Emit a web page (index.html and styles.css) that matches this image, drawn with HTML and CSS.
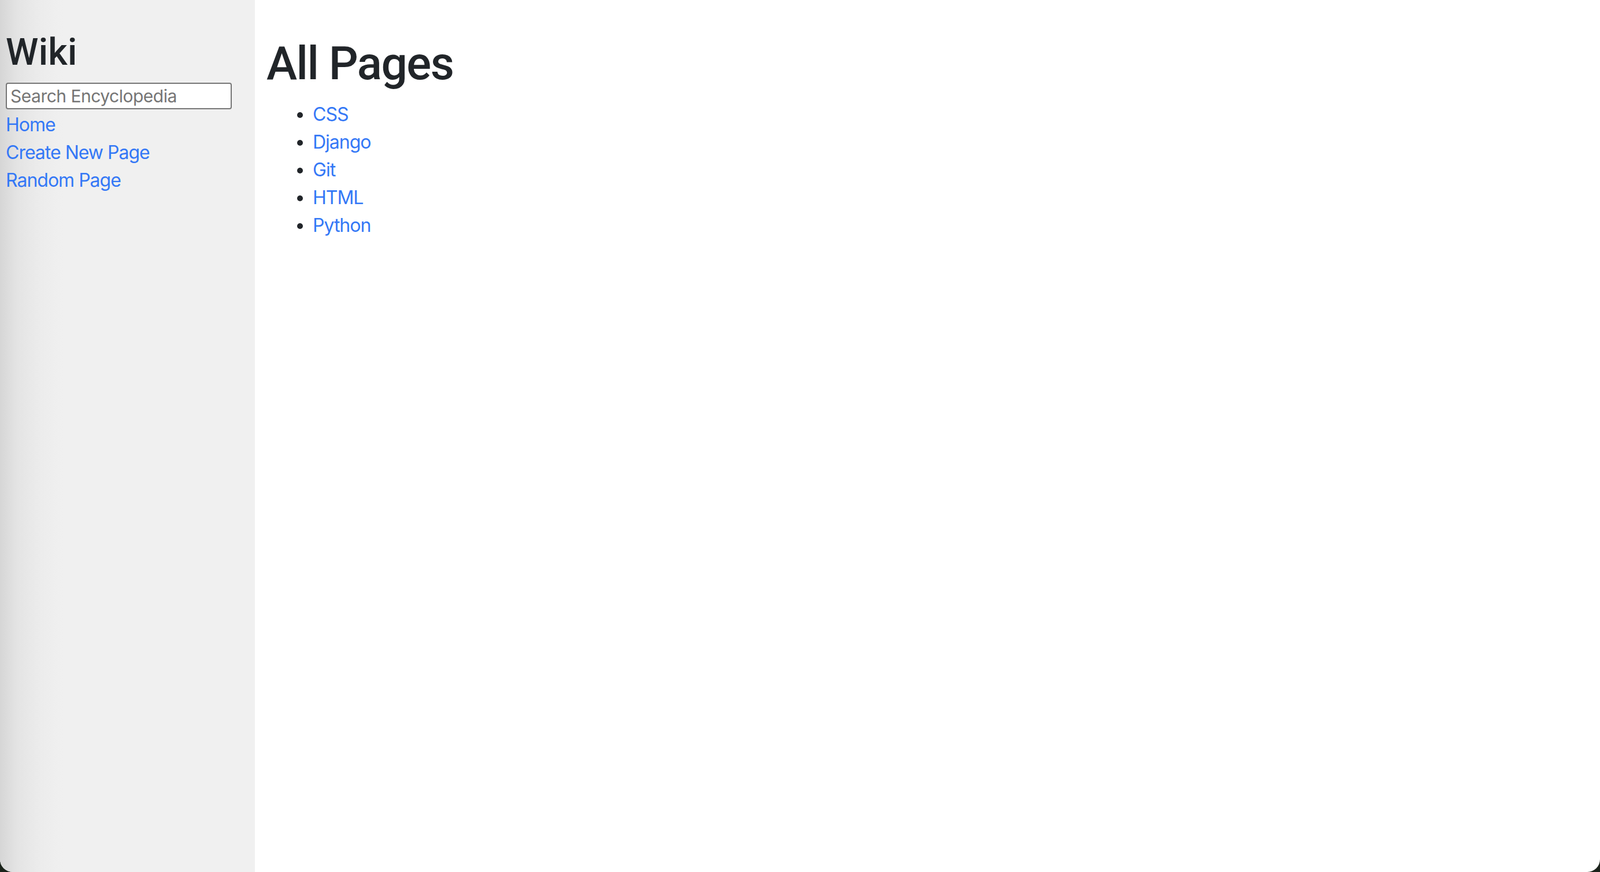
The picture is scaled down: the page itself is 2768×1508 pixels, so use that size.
FILE: index.html
```html
<!DOCTYPE html>
<html lang="en">
<head>
<meta charset="utf-8">
<title>Encyclopedia</title>
<link rel="stylesheet" href="styles.css">
</head>
<body>
<div class="window">
  <div class="row">
    <div class="sidebar">
      <h2 class="brand">Wiki</h2>
      <form class="search-form">
        <input class="search" type="text" name="q" placeholder="Search Encyclopedia">
      </form>
      <div class="nav-item"><a href="#">Home</a></div>
      <div class="nav-item"><a href="#">Create New Page</a></div>
      <div class="nav-item"><a href="#">Random Page</a></div>
    </div>
    <div class="main">
      <h1 class="title">All Pages</h1>
      <ul class="pages">
        <li><a href="#">CSS</a></li>
        <li><a href="#">Django</a></li>
        <li><a href="#">Git</a></li>
        <li><a href="#">HTML</a></li>
        <li><a href="#">Python</a></li>
      </ul>
    </div>
  </div>
</div>
</body>
</html>
```
FILE: styles.css
```css
html, body {
  margin: 0;
  height: 100%;
}
body {
  background: #1b231b;
  font-family: Inter, "Noto Sans", "Liberation Sans", sans-serif;
  font-size: 32px;
  line-height: 1.5;
  color: #212529;
  overflow: hidden;
}
.window {
  height: 1508px;
  background: #ffffff;
  border-radius: 0 0 22px 22px;
  overflow: hidden;
}
.row {
  display: flex;
  height: 100%;
}
.sidebar {
  width: 441px;
  flex: none;
  box-sizing: border-box;
  padding: 40px 40px 40px 10px;
  background: linear-gradient(to right, #d6d6d6 0px, #e4e4e4 30px, #ececec 70px, #f0f0f0 110px);
}
.brand {
  margin: 13px 0 13px 0;
  font-family: Roboto, Inter, sans-serif;
  font-size: 64px;
  line-height: 1.2;
  font-weight: 500;
  letter-spacing: 0.3px;
}
.search-form {
  margin: 0 0 3px 0;
}
.search {
  display: block;
  box-sizing: border-box;
  width: 391px;
  height: 46px;
  margin: 0;
  padding: 2px 6px;
  border: 2px solid #767676;
  border-radius: 4px;
  background: #ffffff;
  font-family: Inter, "Noto Sans", "Liberation Sans", sans-serif;
  font-size: 30px;
  line-height: 30px;
  letter-spacing: -0.5px;
  color: #212529;
  outline: none;
}
.search::placeholder {
  color: #757575;
  opacity: 1;
}
.nav-item a,
.pages a {
  color: #3478f6;
  text-decoration: none;
  letter-spacing: -1px;
}
.main {
  flex: 1;
  padding: 20px;
}
.title {
  margin: 0 0 16px 0;
  padding-top: 42px;
  font-family: Roboto, Inter, sans-serif;
  font-size: 80px;
  line-height: 1.2;
  font-weight: 500;
  letter-spacing: -1.5px;
}
.pages {
  margin: 0 0 32px 0;
  padding-left: 80px;
}
```
